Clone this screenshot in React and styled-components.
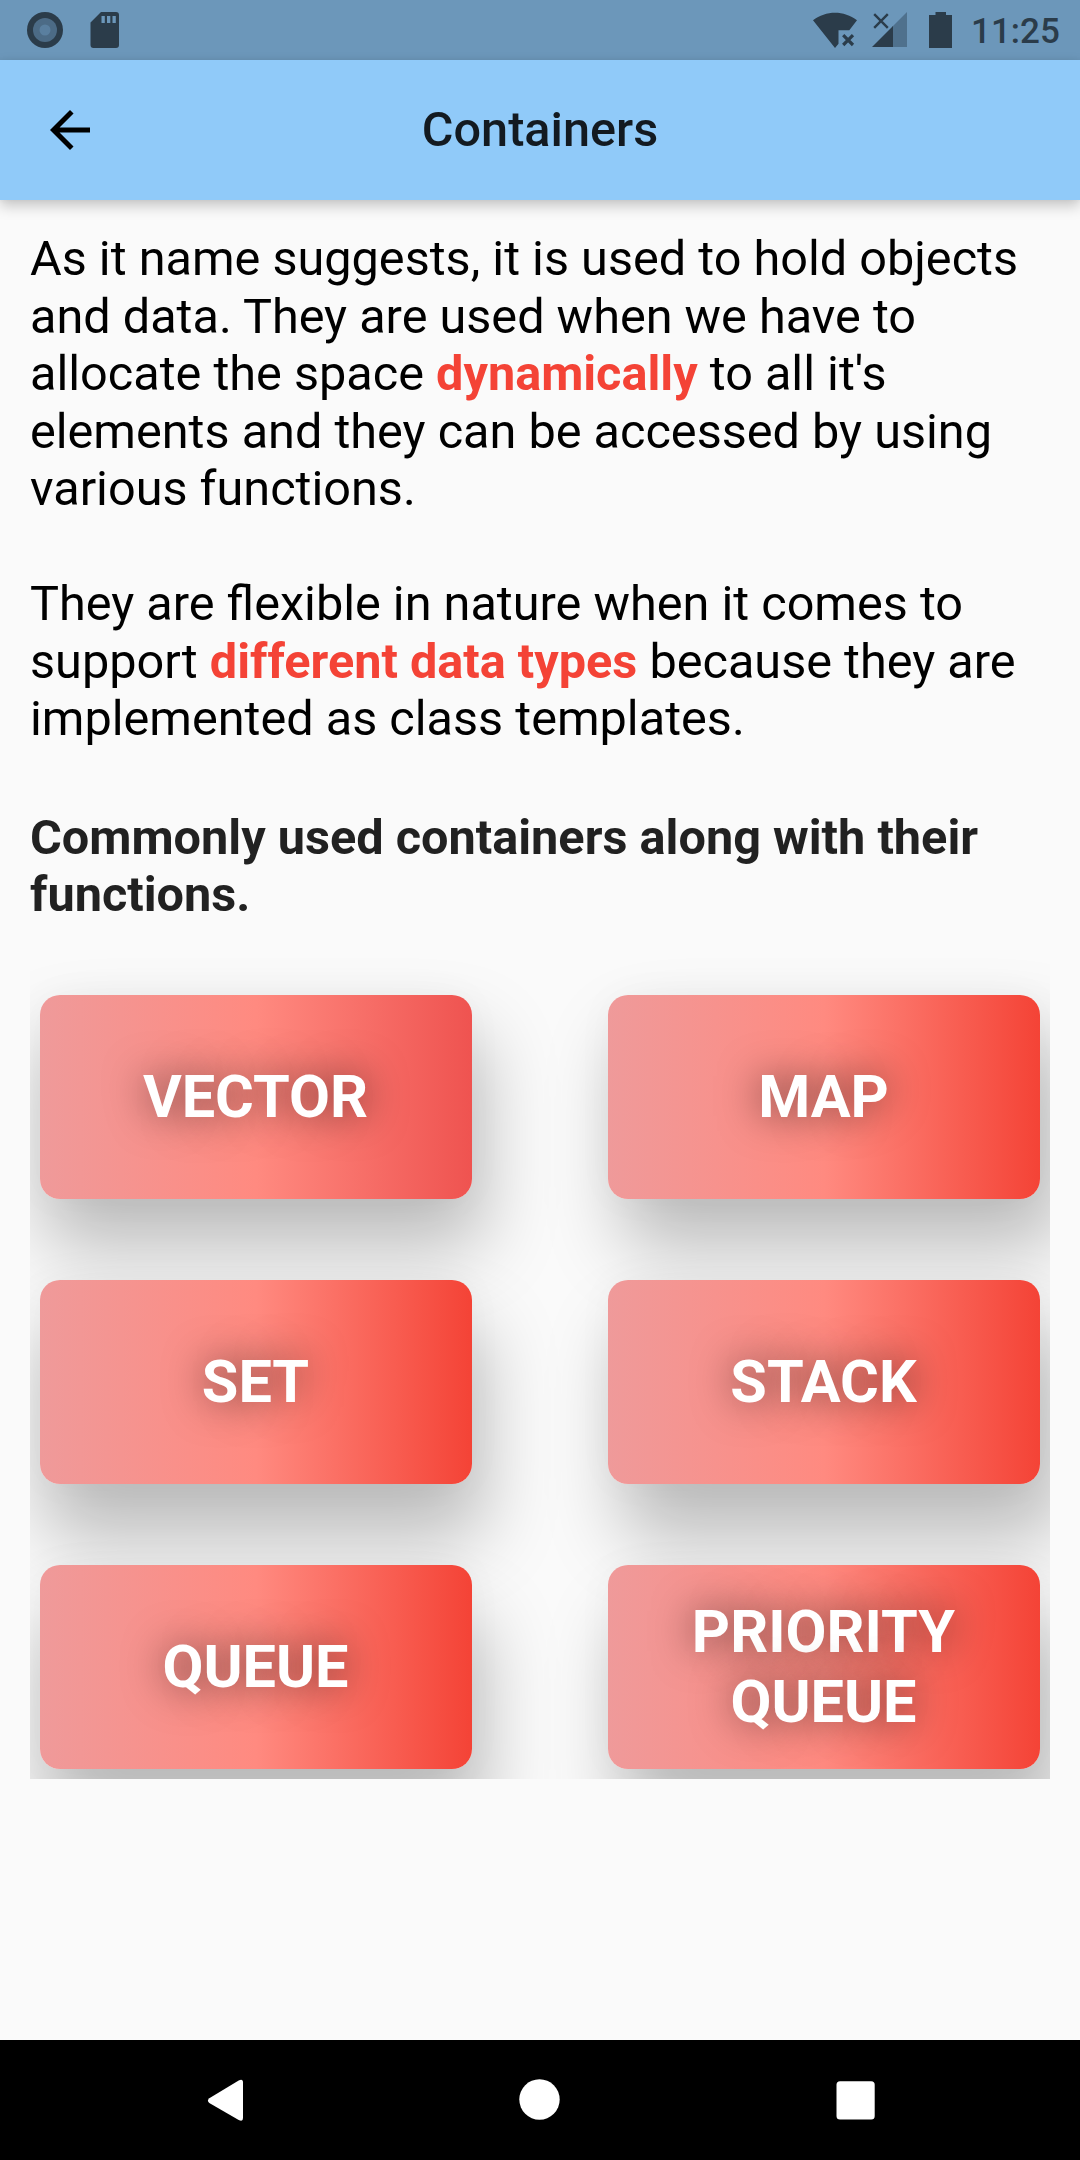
import React from 'react';
import styled, { createGlobalStyle } from 'styled-components';

const GlobalStyle = createGlobalStyle`
  * { box-sizing: border-box; }
  body { margin: 0; background: #fafafa; font-family: Roboto, "Noto Sans", sans-serif; }
`;

const Screen = styled.div`
  width: 1080px;
  height: 2160px;
  display: flex;
  flex-direction: column;
  overflow: hidden;
  background: #fafafa;
`;

const StatusBar = styled.header`
  flex: 0 0 60px;
  display: flex;
  justify-content: space-between;
  align-items: center;
  padding: 0 20px 0 25px;
  background: #6c97ba;
  color: #2b3c4a;
`;

const StatusGroup = styled.div`
  display: flex;
  align-items: center;
  gap: ${(p) => p.$gap}px;
`;

const Clock = styled.span`
  width: 89px;
  margin-left: 5px;
  padding-top: 3px;
  font-size: 35px;
  font-weight: 500;
  line-height: 57px;
  white-space: nowrap;
`;

const AppBar = styled.div`
  flex: 0 0 140px;
  display: grid;
  grid-template-columns: 140px 1fr 140px;
  align-items: center;
  background: #90caf9;
  box-shadow: 0 6px 13px rgba(0, 0, 0, 0.21), 0 0 5px rgba(0, 0, 0, 0.05);
`;

const BackButton = styled.button`
  display: flex;
  width: 60px;
  height: 60px;
  padding: 0;
  margin-left: 40px;
  border: 0;
  background: none;
  color: #000;
`;

const Title = styled.h1`
  margin: 0;
  text-align: center;
  font-size: 48.6px;
  font-weight: 500;
  line-height: 58px;
  color: rgba(0, 0, 0, 0.87);
`;

const Content = styled.main`
  flex: 1;
  display: flex;
  flex-direction: column;
  padding: 30px 30px 0;
`;

const Paragraph = styled.p`
  margin: 0 0 57.5px;
  font-size: 48.62px;
  line-height: 57.5px;
  color: #000;
`;

const Emphasis = styled.strong`
  font-weight: 700;
  color: #f44336;
`;

const Heading = styled.h2`
  margin: 3.5px 0 0;
  font-size: 48.65px;
  font-weight: 700;
  line-height: 57.5px;
  color: rgba(0, 0, 0, 0.87);
`;

const Grid = styled.section`
  display: grid;
  grid-template-columns: 432px 432px;
  grid-auto-rows: 203.8px;
  justify-content: space-between;
  row-gap: 81.1px;
  margin-top: 31.5px;
  padding: 40px 10px 10px;
  overflow: hidden;
`;

const Tile = styled.button`
  display: flex;
  align-items: center;
  justify-content: center;
  padding: 0 51px 0 50px;
  border: 0;
  border-radius: 20px;
  background: linear-gradient(90deg, #ef9a9a, #ff8a80, ${(p) => p.$end});
  box-shadow:
    ${(p) => p.$x}px ${(p) => p.$y}px 74px 4px rgba(0, 0, 0, 0.25),
    0 0 40px rgba(0, 0, 0, 0.03);
  color: #fff;
  font-family: inherit;
  font-size: 59.4px;
  font-weight: 700;
  line-height: 70px;
  text-align: center;
  text-shadow: 0 0 40px rgba(0, 0, 0, 0.62);
`;

const NavBar = styled.nav`
  flex: 0 0 120px;
  display: flex;
  justify-content: center;
  align-items: center;
  gap: 255px;
  background: #000;
  color: #fff;
`;

const tiles = [
  { label: 'VECTOR', end: '#ef5350', x: 7, y: 45 },
  { label: 'MAP', end: '#f44336', x: 18, y: 45 },
  { label: 'SET', end: '#f44336', x: 7, y: 51 },
  { label: 'STACK', end: '#f44336', x: 18, y: 51 },
  { label: 'QUEUE', end: '#f44336', x: 7, y: 57 },
  { label: 'PRIORITY QUEUE', end: '#f44336', x: 18, y: 57 },
];

const RecordIcon = () => (
  <svg width="40" height="40" viewBox="0 0 40 40">
    <circle cx="20" cy="20" r="18" fill="#2b3c4a" />
    <circle cx="20" cy="20" r="12" fill="#4c6b86" />
    <circle cx="20" cy="20" r="5.5" fill="#5a7f9f" />
  </svg>
);

const SdCardIcon = () => (
  <svg width="30" height="36" viewBox="0 0 30 36">
    <path
      fill="#2b3c4a"
      d="M11 0H26a3 3 0 0 1 3 3V33a3 3 0 0 1-3 3H3.500a3 3 0 0 1-3-3V10.500Z"
    />
    <path fill="#6c97ba" d="M11.500 4h3.300v7h-3.300zM17 4h3.300v7H17zM22.500 4h3.300v7h-3.300z" />
  </svg>
);

const WifiOffIcon = () => (
  <svg width="46" height="36" viewBox="0 0 46 36">
    <path fill="currentColor" d="M1 8.300C14-1.800 32-1.800 45 8.300L37.300 18.200H26.500V31.800L23 36Z" />
    <path d="M31.200 23.200l9.800 9.800M41 23.200l-9.800 9.800" stroke="currentColor" strokeWidth="3.200" />
  </svg>
);

const SignalIcon = () => (
  <svg width="42" height="36" viewBox="0 0 42 36">
    <path fill="#4f718d" d="M35 0V35H20V15Z" />
    <path fill="currentColor" d="M0 35L21 14V35Z" />
    <path d="M2.200 2.200L15.800 15.800M15.800 2.200L2.200 15.800" stroke="currentColor" strokeWidth="2.400" />
  </svg>
);

const BatteryIcon = () => (
  <svg width="24" height="36" viewBox="0 0 24 36">
    <path fill="currentColor" d="M7.500 0H18V3H24V36H1V3H7.500Z" />
  </svg>
);

const ArrowBackIcon = () => (
  <svg width="60" height="60" viewBox="0 0 24 24">
    <path fill="currentColor" d="M20 11H7.830l5.590-5.590L12 4l-8 8 8 8 1.410-1.410L7.830 13H20v-2z" />
  </svg>
);

const NavBackIcon = () => (
  <svg width="60" height="60" viewBox="0 0 60 60">
    <path
      fill="currentColor"
      d="M14.300 28.300L43.700 10.400Q48 8.300 48 12.500V48Q48 52.200 43.700 49.900L14.300 33Q11.500 30.700 14.300 28.300Z"
    />
  </svg>
);

const NavHomeIcon = () => (
  <svg width="60" height="60" viewBox="0 0 60 60">
    <circle cx="29.500" cy="29.500" r="20.200" fill="currentColor" />
  </svg>
);

const NavRecentIcon = () => (
  <svg width="60" height="60" viewBox="0 0 60 60">
    <rect x="11.500" y="11.300" width="38.200" height="38.300" rx="3.500" fill="currentColor" />
  </svg>
);

export default function App() {
  return (
    <>
      <GlobalStyle />
      <Screen>
        <StatusBar>
          <StatusGroup $gap={25}>
            <RecordIcon />
            <SdCardIcon />
          </StatusGroup>
          <StatusGroup $gap={14}>
            <WifiOffIcon />
            <SignalIcon />
            <BatteryIcon />
            <Clock>11:25</Clock>
          </StatusGroup>
        </StatusBar>
        <AppBar>
          <BackButton aria-label="Back">
            <ArrowBackIcon />
          </BackButton>
          <Title>Containers</Title>
        </AppBar>
        <Content>
          <Paragraph>
            As it name suggests, it is used to hold objects and data. They are used when we have to
            allocate the space <Emphasis>dynamically</Emphasis> to all it's elements and they can be
            accessed by using various functions.
          </Paragraph>
          <Paragraph>
            They are flexible in nature when it comes to support{' '}
            <Emphasis>different data types</Emphasis> because they are implemented as class
            templates.
          </Paragraph>
          <Heading>Commonly used containers along with their functions.</Heading>
          <Grid>
            {tiles.map((t) => (
              <Tile key={t.label} $end={t.end} $x={t.x} $y={t.y}>
                {t.label}
              </Tile>
            ))}
          </Grid>
        </Content>
        <NavBar>
          <NavBackIcon />
          <NavHomeIcon />
          <NavRecentIcon />
        </NavBar>
      </Screen>
    </>
  );
}
